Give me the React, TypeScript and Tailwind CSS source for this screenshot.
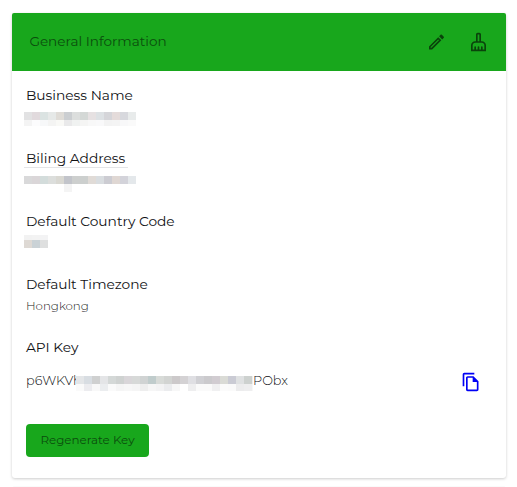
import React from "react";
import { MdOutlineCleaningServices, MdOutlineEdit, MdOutlineFileCopy } from "react-icons/md";

function Cells({ colors, height }: { colors: string[]; height: number }) {
  return (
    <div className="flex" style={{ height }}>
      {colors.map((c, i) => (
        <span key={i} className="h-full w-2 shrink-0" style={{ backgroundColor: c }} />
      ))}
    </div>
  );
}

const nameTop = ["#e2e2e3", "#e1dadd", "#dbe3e2", "#e6e9e8", "#dfdcd7", "#cbced1", "#dcdedd", "#d4d8d6", "#e6e1e2", "#dde1e4", "#d5d5d9", "#e4dbda", "#d7d8dd", "#e8ebeb"];
const nameBottom = ["#f4f4f4", "#fcfcfd", "#f7f8f9", "#f4f4f3", "#f9f9f6", "#e9e9ea", "#f0f2f1", "#f5f5f4", "#f8f8f8", "#f9f9fa", "#f3f3f3", "#f4f4f4", "#f8f8f9", "#fafafa"];
const address = ["#d9d9da", "#dad6d8", "#d3dcdb", "#dcdedc", "#d9d8d2", "#c2c4ca", "#cdcfce", "#cccfce", "#e0dbd7", "#d9dde0", "#ccccd2", "#dfd7d3", "#d3d3da", "#e4e8eb"];
const addressBottom = ["#fff", "#fff", "#fff", "#fff", "#fff", "#f4f4f4"];
const keyTop = ["#e4e6e8", "#d8dde2", "#cfd0d0", "#e4e5e7", "#d4d8d7", "#cfd2d1", "#d9d6d9", "#d7d9d8", "#d0d3d3", "#c0cccc", "#d8dbd8", "#d2d4d2", "#ccc9ca", "#d4d2d4", "#dfdfe3", "#d0d0d4", "#cbcacd", "#d1ccd1", "#dadbd6", "#cacbd4", "#dfe1e2", "#cdd1cf", "#eeeeef"];
const keyBottom = ["#fafafa", "#ececef", "#f8f8f8", "#ebedef", "#fafafa", "#f5f5f5", "#f7f7f7", "#f5f5f5", "#eeeeee", "#f6f6f6", "#f3f3f4", "#ebecee", "#f7f7f7", "#fff", "#eeeeef", "#fafafa", "#fafafa", "#f0f0f1", "#fbfbfb", "#fafafa", "#ececed", "#eeeeef", "#f7f7f7"];

function Field({ label, children }: { label: string; children: React.ReactNode }) {
  return (
    <section className="h-[63px]">
      <h2 className="h-5 pl-[14px] text-[13.75px] leading-5 whitespace-nowrap">{label}</h2>
      {children}
    </section>
  );
}

export default function App() {
  return (
    <main className="h-[487px] overflow-hidden bg-white px-3 pt-[13px] pr-[11px] font-['Montserrat','Inter',sans-serif] text-[#101114]">
      <article className="h-[465px] rounded-[3px] bg-white shadow-[0_1px_3px_rgba(0,0,0,0.2)]">
        <header className="flex h-[58px] items-center rounded-t-[2px] bg-[#18a71c] pr-[18px] pl-[17.4px] text-[#0b4d0d]">
          <h1 className="-mt-[2px] text-[13.6px] leading-5">General Information</h1>
          <button aria-label="Edit" className="ml-auto translate-x-[0.5px] text-[#0a430b]"><MdOutlineEdit size={20} /></button>
          <button aria-label="Clear" className="ml-[22px] translate-x-[0.5px] text-[#0a430b]"><MdOutlineCleaningServices size={20} /></button>
        </header>
        <div className="pt-[14px]">
          <Field label="Business Name">
            <div className="mt-[7px] ml-3">
              <Cells colors={nameTop} height={8} />
              <Cells colors={nameBottom} height={6} />
            </div>
          </Field>
          <Field label="Biling Address">
            <div className="-mt-px ml-3 h-px w-[104px] bg-[#e4e5e7]" />
            <div className="mt-2 ml-3">
              <Cells colors={address} height={8} />
              <Cells colors={addressBottom} height={8} />
            </div>
          </Field>
          <Field label="Default Country Code">
            <div className="mt-1 ml-3">
              <Cells colors={["#f2f2f2", "#f3f3f3", "#f3f3f4"]} height={5} />
              <Cells colors={["#ded9d4", "#cad2d6", "#dedfdf"]} height={8} />
            </div>
          </Field>
          <Field label="Default Timezone">
            <p className="mt-[3px] pl-[14px] text-[11.8px] leading-[18px] font-light text-[#222]">Hongkong</p>
          </Field>
          <section>
            <h2 className="h-5 pl-[14px] text-[13.75px] leading-5">API Key</h2>
            <div className="mt-[13px] flex h-[22px] items-center pr-[25px] pl-[14px] text-[12.8px] font-light">
              <span className="w-[50px] shrink-0 whitespace-nowrap">p6WKVh</span>
              <div className="relative mt-1 w-[177px] shrink-0 overflow-hidden">
                <Cells colors={keyTop} height={8} />
                <Cells colors={keyBottom} height={7} />
              </div>
              <span>PObx</span>
              <button aria-label="Copy key" className="mt-px ml-auto text-[#0000f5]"><MdOutlineFileCopy size={20} /></button>
            </div>
            <button className="mt-8 ml-[14px] h-[33px] w-[123px] rounded-[4px] bg-[#18a71c] pb-[2px] text-[11.9px] whitespace-nowrap text-[#0b4d0d]">Regenerate Key</button>
          </section>
        </div>
      </article>
      <div className="mt-2 h-5 rounded-[3px] border-t border-[#fafafa] bg-white" />
    </main>
  );
}
